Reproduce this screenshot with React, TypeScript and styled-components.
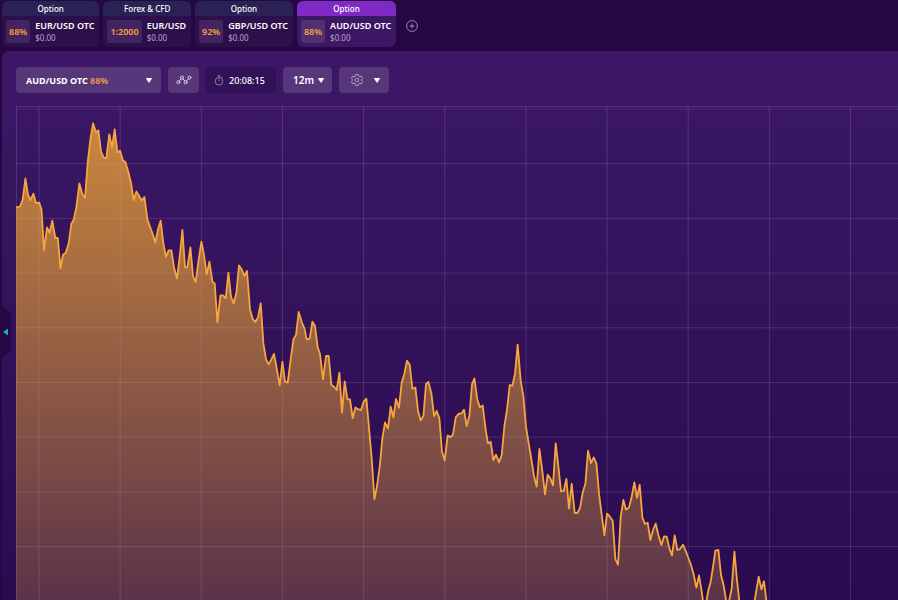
import React from "react";
import styled, { createGlobalStyle } from "styled-components";

const GlobalStyle = createGlobalStyle`
  * { box-sizing: border-box; }
  body { margin: 0; background: #250744; }
  body, button, select { font-family: "Noto Sans", "Open Sans", sans-serif; color: #fff; }
  button, select { margin: 0; padding: 0; border: 0; cursor: pointer; }
`;

const Page = styled.div`
  display: flex;
  flex-direction: column;
  min-height: 100vh;
  overflow: hidden;
  background: #250744;
`;

const TabBar = styled.nav`
  display: flex;
  align-items: center;
  gap: 4px;
  height: 51px;
  padding: 1px 2px 4px;
`;

const Tab = styled.button<{ $active?: boolean }>`
  display: flex;
  flex-direction: column;
  flex: none;
  height: 46px;
  overflow: hidden;
  border-radius: 6px;
  text-align: left;
  background: ${(p) => (p.$active ? "#3c1764" : "#2d0f4c")};
`;

const TabKind = styled.span<{ $active?: boolean }>`
  width: 100%;
  height: 15px;
  font-size: 8px;
  font-weight: 500;
  line-height: 15px;
  text-align: center;
  background: ${(p) => (p.$active ? "#7f2ac4" : "#2a2154")};
`;

const TabBody = styled.span`
  display: flex;
  gap: 5px;
  padding: 4px 5px 3px 4px;
`;

const Rate = styled.span<{ $active?: boolean }>`
  min-width: 24px;
  height: 23px;
  padding: 0 3px;
  border-radius: 3px;
  font-size: 9px;
  font-weight: 600;
  line-height: 23px;
  text-align: center;
  color: #f9a144;
  background: ${(p) => (p.$active ? "#51306f" : "#42255e")};
`;

const Asset = styled.span`
  display: flex;
  flex-direction: column;
  font-size: 9px;
  font-weight: 600;
  line-height: 12px;
  white-space: nowrap;
`;

const Amount = styled.span`
  font-size: 8px;
  font-weight: 400;
  line-height: 11px;
  color: #b9a8c8;
`;

const AddButton = styled.button`
  display: flex;
  margin: 4px 0 0 6px;
  background: none;
  color: #a595b6;
`;

const Workspace = styled.main`
  display: flex;
  flex: 1;
  flex-direction: column;
  position: relative;
  margin-left: 2px;
  padding: 16px 0 0 14px;
  border-radius: 7px 0 0 0;
  background: linear-gradient(#3c1866, #2a0b50);
`;

const Toolbar = styled.div`
  display: flex;
  gap: 7px;
  height: 39px;
`;

const Control = styled.button<{ $width: number }>`
  display: flex;
  align-items: center;
  justify-content: center;
  flex: none;
  width: ${(p) => p.$width}px;
  height: 26px;
  border-radius: 4px;
  font-size: 9px;
  font-weight: 700;
  background: #573779;
`;

const AssetPicker = styled(Control)`
  justify-content: space-between;
  padding: 0 9px 0 10px;
`;

const Payout = styled.span`
  font-weight: 600;
  color: #f9a144;
`;

const SettingsButton = styled(Control)`
  justify-content: space-between;
  padding: 0 9px 0 12px;
`;

const Clock = styled.time`
  display: flex;
  align-items: center;
  gap: 5px;
  width: 70px;
  height: 26px;
  padding-left: 8px;
  border-radius: 4px;
  font-size: 9px;
  font-weight: 500;
  background: #311158;
`;

const PeriodBox = styled.label`
  display: grid;
  align-items: center;
  width: 49px;
  height: 26px;
  border-radius: 4px;
  background: #573779;

  & > * { grid-area: 1 / 1; }
  & > svg { justify-self: end; margin-right: 8px; pointer-events: none; }
`;

const PeriodSelect = styled.select`
  width: 100%;
  height: 26px;
  padding-left: 10px;
  appearance: none;
  font-size: 10px;
  font-weight: 600;
  background: none;

  option { color: #250744; }
`;

const ChartArea = styled.div`
  flex: 1;
  min-height: 0;
  display: grid;
`;

const ChartSvg = styled.svg`
  display: block;
  width: 100%;
  height: 100%;
`;

const DrawerHandle = styled.button`
  position: absolute;
  left: -2px;
  top: calc(50% + 6px);
  width: 13px;
  height: 52px;
  transform: translateY(-50%);
  background: none;
`;

const Caret = () => (
  <svg width="6" height="5" viewBox="0 0 6 5" aria-hidden="true">
    <path d="M.5 0h5q.8 0 .3.8L3.6 4.2q-.6.7-1.2 0L.2.8Q-.3 0 .5 0Z" fill="#fff" />
  </svg>
);

const LineIcon = () => (
  <svg width="16" height="10" viewBox="0 0 16 10" fill="none" stroke="#dccfe8" strokeWidth="1" strokeLinecap="round" aria-hidden="true">
    <circle cx="2.3" cy="7.3" r="1.5" />
    <circle cx="6" cy="2.6" r="1.5" />
    <circle cx="9.6" cy="7.3" r="1.5" />
    <circle cx="13.4" cy="2.6" r="1.5" />
    <path d="M3.2 6.1l1.9-2.3M6.9 3.8l1.9 2.3M10.6 6.1l1.9-2.3" />
  </svg>
);

const StopwatchIcon = () => (
  <svg width="10" height="11" viewBox="0 0 10 11" fill="none" stroke="#9080a8" aria-hidden="true">
    <circle cx="5" cy="6.3" r="3.8" />
    <path d="M3.5.8h3M5 .8v1.7M5 4.3v2M8 2.7l.9-.8" />
  </svg>
);

const GearIcon = () => (
  <svg width="12" height="12" viewBox="0 0 12 12" fill="none" stroke="#c1aed2" strokeWidth=".9" strokeLinejoin="round" aria-hidden="true">
    <path d="M4.6.7h2.8l.5 1.6.8.4 1.6-.4 1.3 2.3L10.5 5.7v.6l1.1 1.1-1.3 2.3-1.6-.4-.8.4-.5 1.6H4.6l-.5-1.6-.8-.4-1.6.4L.4 7.4l1.1-1.1v-.6L.4 4.6l1.3-2.3 1.6.4.8-.4Z" />
    <rect x="4.4" y="4.4" width="3.2" height="3.2" rx=".9" />
  </svg>
);

const PlusIcon = () => (
  <svg width="12" height="12" viewBox="0 0 12 12" fill="none" stroke="currentColor" strokeWidth=".9" aria-hidden="true">
    <circle cx="6" cy="6" r="5.4" />
    <path d="M3.4 6h5.2M6 3.4v5.2" />
  </svg>
);

const tabs = [
  { kind: "Option", rate: "88%", asset: "EUR/USD OTC" },
  { kind: "Forex & CFD", rate: "1:2000", asset: "EUR/USD" },
  { kind: "Option", rate: "92%", asset: "GBP/USD OTC" },
  { kind: "Option", rate: "88%", asset: "AUD/USD OTC", active: true },
];

const prices = `16,207.5 20,206.5 22.7,199.5 25.4,178.5 28,195 30.5,200 33.4,193.7 36,203 39.3,202.7 41.5,209.5
44,250.5 47,227.5 49.6,232.7 52.3,220.7 55.3,238 57.8,238 60.5,268.3 63,254.7 65.7,252.7 68.7,243.3
71.3,224 73.8,219.5 76.4,206.7 79.4,183.4 82.3,194 85,197.7 87.8,161.7 90.4,139.4 93,123.4 96,132.4
98.4,130.4 101,151.7 103.7,157.7 106.3,158 109.3,134.4 112,147.4 114.7,129.4 117.4,152.4 120,150.8
123,160.4 125.4,162 128,170.8 131,182.7 133.7,200 136.4,191.4 139,195.7 141.7,200.5 144.4,197
147.4,219.4 150,226.7 152.7,234 155.4,242.7 158,229 160.7,220.7 163.4,244 166,256.7 168.7,250.4
171.4,250.4 174,267.4 177,278.4 179.7,256.7 182.4,230 185,267.4 187.4,267.4 190.4,247.4 193,276
195.7,282 198.7,259.4 201.4,241.7 204,255 206.7,274.4 209.4,261.7 212.4,281.7 214.7,283.4 217.4,322.4
220.4,295.4 223,295.4 225.7,298.4 228.4,272.7 231,296.7 233.7,303.4 236.4,292.7 239,265.4 242,270
244.4,276 247,271 250,309.4 252.7,319 255.4,322 258,317.4 260.7,303.4 263.4,343.4 266,359.4
268.7,364.4 271.4,359.4 274,354 277,370 279.7,385.4 282.4,361.7 285,381.7 287.7,382.7 290.4,361.7
293.4,339.4 296,335 298.7,312 301.7,322 304.4,328.4 306.7,339.4 309.7,338.7 312.4,321.7 315,326
317.7,347.4 320,354 323,379.4 326,356 328.7,356 331.4,385 334,386.7 336.7,390 339.4,372.7 342,412.7
344.7,381.4 347.4,399.4 350,399.4 352.7,418 355.4,407.4 358.4,409.4 361,410 363.7,401.7 366.4,398.7
369,428 371.7,458.4 374.4,499.4 377,486 379.7,466.7 382.4,438.4 385,422.4 388,428.4 390.7,406.7
393.4,417.4 396,399 399,407.7 401.7,382.4 404.4,373.4 407,360.7 409.7,364.7 412.4,388.7 415.4,387.7
418,410.7 420.7,420.4 423.4,416 426,384 428.4,382 431.4,393.4 434,416 436.7,411 439.4,418.4
442,451.7 444.7,460.4 447.7,435.4 450.4,437 453,434.7 455.7,417.4 458.4,414 461.4,413.4 464,409.7
466.7,426 469.4,415.7 472,384.4 474.4,378.4 477.4,400 480,407.4 482.7,405.4 485.7,430 488,443.4
490.7,441.7 493.4,460 496,454.7 499,462.4 501.7,455 504.4,426 507,410 509.7,385 512.4,385.7
515,373.4 517.7,344.7 520.7,380.7 523.4,396.7 526,426.7 528.7,443.4 531.4,459.4 534,476 536.7,486.7
539.4,449 542,468.4 545,494.4 547.7,474.7 550.4,478.7 553,485.4 555.7,443.4 558.4,466.7 561,491.4
563.7,491 566.4,479 569,508.7 571.7,483.7 574.7,513 577.4,513 580,508 582.7,492.7 585.4,483.4
588,450.7 591,463 593.7,457.4 596.4,463.4 599,493.4 601.7,515 604.4,535.4 607,513.7 609.7,516.4
612.7,520.7 615.4,559.4 618,564.7 620.7,516.7 623.4,500 626,509.7 629,507.4 631.7,496.7 634.4,482.4
637,497.7 639.7,484.7 642.4,517.7 645,524 647.7,522.7 650.4,540 653,530 655.7,523.7 658.4,535
661.4,545 664,536.4 666.7,536.7 669.4,548.4 672,555.4 674.7,535.4 677.4,550 680,549 683,544.7
685.7,551 688.4,558 691,565 693.7,574.4 696.4,587.7 699,575.4 701.7,591.7 704.4,612 708.4,590
710.7,581.7 713,567 715.4,550.7 718.4,550 721,575 723.7,585.7 727.5,609 731.7,588.4 734.4,551.7
737,580 739.4,602 745,635 754.4,602 758.7,576.7 761.4,589.4 764,581.4 766.8,604 770,640`;

const columns = Array.from({ length: 11 }, (_, i) => 39 + i * 81.15);
const rows = Array.from({ length: 9 }, (_, i) => 109 + i * 54.7);

const Chart = () => (
  <ChartSvg viewBox="16 106 882 494" preserveAspectRatio="xMinYMin slice" role="img" aria-label="AUD/USD OTC price chart">
    <defs>
      <linearGradient id="area" gradientUnits="userSpaceOnUse" x1="0" y1="123" x2="0" y2="600">
        <stop offset="0" stopColor="#ca873d" />
        <stop offset="1" stopColor="#5b3349" />
      </linearGradient>
    </defs>
    <polygon points={`${prices} 770,700 16,700`} fill="url(#area)" />
    <g stroke="#c39fd0" strokeOpacity=".2">
      <path d="M16 106.5H898M16.5 106V600" />
      {columns.map((x) => <path key={x} d={`M${x} 106V600`} />)}
      {rows.map((y) => <path key={y} d={`M16 ${y}H898`} />)}
    </g>
    <polyline points={prices} fill="none" stroke="#f7a63e" strokeWidth="1.8" strokeLinejoin="round" />
  </ChartSvg>
);

export default function App() {
  return (
    <>
      <GlobalStyle />
      <Page>
        <TabBar aria-label="Open assets">
          {tabs.map((tab) => (
            <Tab key={tab.kind + tab.asset} $active={tab.active} aria-current={tab.active ? "page" : undefined}>
              <TabKind $active={tab.active}>{tab.kind}</TabKind>
              <TabBody>
                <Rate $active={tab.active}>{tab.rate}</Rate>
                <Asset>
                  {tab.asset}
                  <Amount>$0.00</Amount>
                </Asset>
              </TabBody>
            </Tab>
          ))}
          <AddButton aria-label="Add asset"><PlusIcon /></AddButton>
        </TabBar>
        <Workspace>
          <Toolbar>
            <AssetPicker $width={145} aria-haspopup="listbox">
              <span>AUD/USD OTC <Payout>88%</Payout></span>
              <Caret />
            </AssetPicker>
            <Control $width={31} aria-label="Chart type"><LineIcon /></Control>
            <Clock><StopwatchIcon />20:08:15</Clock>
            <PeriodBox>
              <PeriodSelect aria-label="Period" defaultValue="12m">
                <option>1m</option>
                <option>12m</option>
                <option>1h</option>
              </PeriodSelect>
              <Caret />
            </PeriodBox>
            <SettingsButton $width={50} aria-label="Chart settings"><GearIcon /><Caret /></SettingsButton>
          </Toolbar>
          <ChartArea><Chart /></ChartArea>
          <DrawerHandle aria-label="Open side panel">
            <svg width="13" height="52" viewBox="0 0 13 52" aria-hidden="true">
              <path d="M0 0h2l9 7v38l-9 7H0Z" fill="#250744" />
              <path d="M3 26l5-3.5v7Z" fill="#17b3a0" />
            </svg>
          </DrawerHandle>
        </Workspace>
      </Page>
    </>
  );
}
